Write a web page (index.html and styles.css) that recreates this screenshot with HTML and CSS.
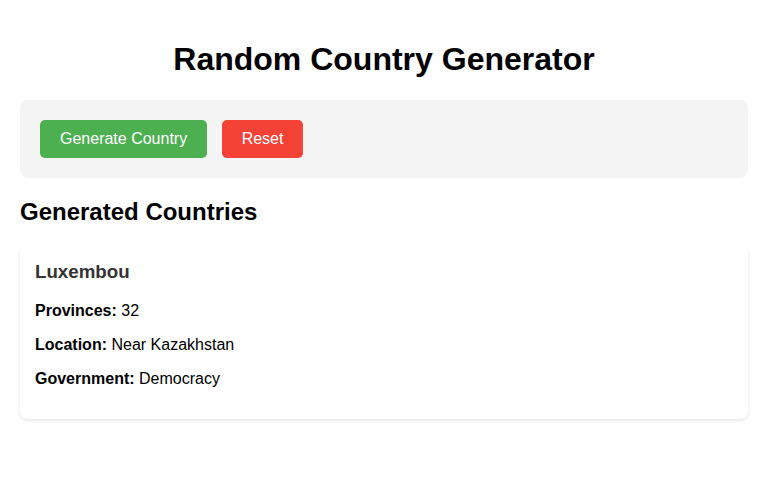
FILE: index.html
```html
<!DOCTYPE html>
<html lang="en">

<head>
    <meta charset="UTF-8">
    <meta name="viewport" content="width=device-width, initial-scale=1.0">
    <title>Random Country Generator</title>
    <link rel="stylesheet" href="styles.css">
</head>

<body>
    <h1>Random Country Generator</h1>

    <div class="controls">
        <button class="btn btn-generate">Generate Country</button>
        <button class="btn btn-reset">Reset</button>
    </div>

    <h2>Generated Countries</h2>
    <div class="country-list">
        <div class="country-card">
            <h3>Luxembou</h3>
            <p><strong>Provinces:</strong> 32</p>
            <p><strong>Location:</strong> Near Kazakhstan</p>
            <p><strong>Government:</strong> Democracy</p>
        </div>
    </div>
</body>

</html>
```

FILE: styles.css
```css
body {
    margin: 0;
    padding: 20px;
    font-family: "Liberation Sans", Arial, sans-serif;
    color: #000;
    background-color: #fff;
}

h1 {
    text-align: center;
}

.controls {
    padding: 20px;
    background-color: #f4f4f4;
    border-radius: 8px;
}

.btn {
    padding: 10px 20px;
    margin-right: 10px;
    font-family: inherit;
    font-size: 16px;
    color: #fff;
    cursor: pointer;
    border: none;
    border-radius: 5px;
}

.btn-generate {
    background-color: #4caf50;
}

.btn-reset {
    background-color: #f44336;
}

.country-card {
    padding: 15px;
    margin-bottom: 15px;
    background-color: #fff;
    border-radius: 8px;
    box-shadow: 0 2px 4px rgba(0, 0, 0, 0.1);
}

.country-card h3 {
    margin: 0 0 19px;
    color: #333;
}
```
